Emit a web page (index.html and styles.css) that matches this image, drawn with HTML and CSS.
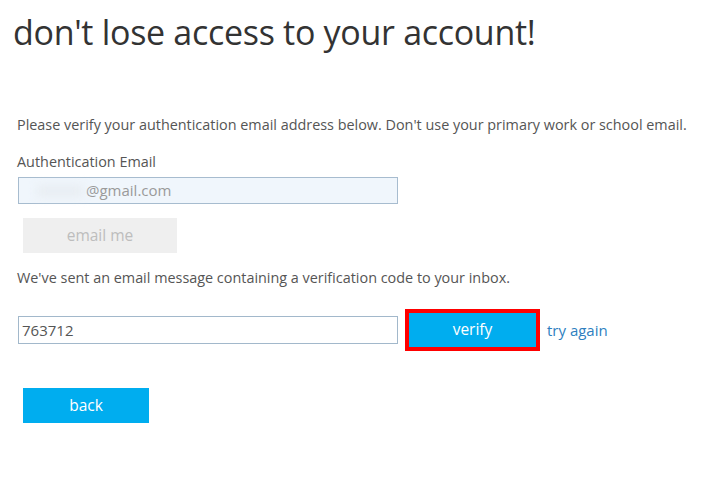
FILE: index.html
```html
<!DOCTYPE html>
<html>
	<head>
		<meta charset="utf-8" />
		<title>don't lose access to your account!</title>
		<link rel="stylesheet" href="styles.css">
	</head>
	<body>
		<div class="page">
			<h1 class="title">don't lose access to your account!</h1>
			<p class="intro">Please verify your authentication email address below. Don't use your primary work or school email.</p>
			<p class="label">Authentication Email</p>
			<div class="email-box">
				<span class="smudge"></span>
				<span class="email-text">@gmail.com</span>
			</div>
			<div class="btn-grey">email me</div>
			<p class="sent">We've sent an email message containing a verification code to your inbox.</p>
			<div class="code-row">
				<div class="code-box">763712</div>
				<div class="verify-wrap">
					<div class="btn-blue btn-verify">verify</div>
				</div>
				<a class="retry" href="#">try again</a>
			</div>
			<div class="btn-blue btn-back">back</div>
		</div>
	</body>
</html>
```

FILE: styles.css
```css
body{
	margin: 0;
	background: #fff;
	font-family: "Open Sans", "Noto Sans", sans-serif;
	color: #555;
}
p{
	margin: 0;
}
.page{
	padding: 0 18px;
}
.title{
	margin: 0 0 0 -5px;
	padding-top: 10px;
	height: 50px;
	font-size: 34px;
	font-weight: 400;
	line-height: 44px;
	color: #333;
	letter-spacing: -0.3px;
}
.intro{
	margin-top: 56px;
	margin-left: -1px;
	font-size: 14.4px;
	line-height: 18px;
}
.label{
	margin-top: 19px;
	margin-left: -1px;
	font-size: 14.4px;
	line-height: 18px;
}
.email-box{
	position: relative;
	margin-top: 6px;
	width: 378px;
	height: 25px;
	border: 1px solid #a7bccf;
	background: #f0f6fc;
	line-height: 25px;
	font-size: 15px;
}
.smudge{
	position: absolute;
	left: 18px;
	top: 7px;
	width: 46px;
	height: 12px;
	background: #e8edf2;
	filter: blur(5px);
}
.email-text{
	margin-left: 67px;
	color: #9a9a9a;
}
.btn-grey{
	margin: 14px 0 0 5px;
	width: 154px;
	height: 35px;
	line-height: 35px;
	background: #efefef;
	color: #bdbdbd;
	text-align: center;
	font-size: 15.5px;
}
.sent{
	margin-top: 16px;
	margin-left: -1px;
	font-size: 14.4px;
	line-height: 18px;
}
.code-row{
	display: flex;
	align-items: center;
	margin-top: 22px;
}
.code-box{
	width: 375px;
	height: 26px;
	padding-left: 3px;
	border: 1px solid #a2b8cb;
	line-height: 26px;
	font-size: 15px;
	color: #555;
}
.verify-wrap{
	margin-left: 7px;
	border: 4px solid #ff0000;
}
.btn-blue{
	background: #00adef;
	color: #fff;
	text-align: center;
	font-size: 15.5px;
}
.btn-verify{
	width: 127px;
	height: 34px;
	line-height: 33px;
}
.retry{
	margin-left: 7px;
	color: #2e7fbf;
	font-size: 15px;
	text-decoration: none;
}
.btn-back{
	margin: 37px 0 0 5px;
	width: 126px;
	height: 35px;
	line-height: 35px;
}
```
